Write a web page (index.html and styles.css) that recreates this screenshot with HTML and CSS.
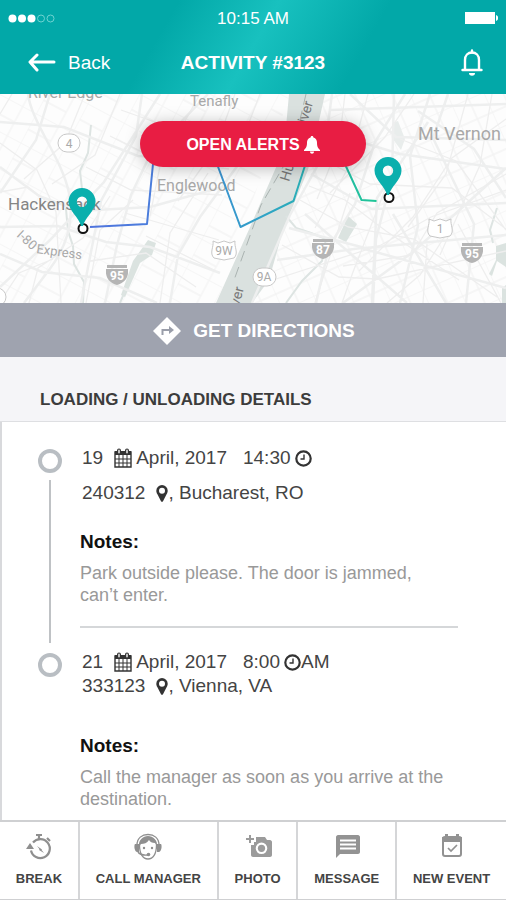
FILE: index.html
```html
<!DOCTYPE html>
<html lang="en">
<head>
<meta charset="utf-8">
<title>Activity #3123</title>
<meta name="viewport" content="width=device-width, initial-scale=1">
<link rel="stylesheet" href="styles.css">
</head>
<body>
<!-- shared icons -->
<svg class="defs" width="0" height="0" aria-hidden="true">
  <symbol id="i-calendar" viewBox="0 0 18 20">
    <path fill="none" stroke="currentColor" stroke-width="1.4" d="M1 4h16v15H1z"/>
    <path fill="currentColor" d="M1 3h16v4H1z"/>
    <path stroke="currentColor" stroke-width="1" d="M1 11h16M1 15h16M5 7v12M9 7v12M13 7v12"/>
    <path stroke="currentColor" stroke-width="4" stroke-linecap="round" d="M5 2.5v2M13 2.5v2"/>
    <path stroke="#fff" stroke-width="1.4" stroke-linecap="round" d="M5 2.3v2.4M13 2.3v2.4"/>
  </symbol>
  <symbol id="i-clock" viewBox="0 0 17 17">
    <circle cx="8.500" cy="8.500" r="7.200" fill="none" stroke="currentColor" stroke-width="2.200"/>
    <path fill="none" stroke="currentColor" stroke-width="1.400" d="M9 4.500V9H5.500"/>
  </symbol>
  <symbol id="i-marker" viewBox="0 0 12 17">
    <path fill="currentColor" fill-rule="evenodd" d="M6 0a5.700 5.700 0 0 1 5.700 5.700c0 1.400-.5 2.400-1 3.400L7 16.200c-.4.800-1.600.8-2 0L1.300 9.100C.8 8.100.3 7.100.3 5.700A5.700 5.700 0 0 1 6 0zm0 2.700a3 3 0 1 0 0 6 3 3 0 0 0 0-6z"/>
  </symbol>
</svg>

<div class="app">
<header class="header">
  <div class="status">
    <svg class="signal" width="48" height="10" viewBox="0 0 48 10" aria-hidden="true">
      <g fill="#fff"><circle cx="4.500" cy="4.500" r="4"/><circle cx="14" cy="4.500" r="4"/><circle cx="23.500" cy="4.500" r="4"/></g>
      <g fill="none" stroke="#6fd3d1"><circle cx="33" cy="4.500" r="3.500"/><circle cx="42.500" cy="4.500" r="3.500"/></g>
    </svg>
    <time class="clock">10:15 AM</time>
    <svg class="battery" width="34" height="14" viewBox="0 0 34 14" aria-hidden="true">
      <path fill="#fff" d="M1 0h30v12H1zM32 3c3 1 3 5 0 6z"/>
    </svg>
  </div>
  <div class="bar">
    <a class="back" href="#">
      <svg width="28" height="20" viewBox="0 0 28 20" aria-hidden="true"><path fill="none" stroke="#fff" stroke-width="3" stroke-linecap="round" stroke-linejoin="round" d="M9 2 2 9l7 8M2.500 9H26"/></svg>
      Back
    </a>
    <h1 class="title">ACTIVITY #3123</h1>
    <button class="bell" type="button" aria-label="Notifications">
      <svg width="24" height="28" viewBox="0 0 24 28"><path fill="none" stroke="#fff" stroke-width="2.400" d="M5 20V11C5 6.500 8 3.500 12 3.500s7 3 7 7.500v9"/><path stroke="#fff" stroke-width="2.400" stroke-linecap="round" d="M2.500 21h19M12 1.500v2"/><path fill="#fff" d="M9 24h6a3 2.700 0 0 1-6 0z"/></svg>
    </button>
  </div>
</header>

<section class="map">
  <svg class="map-art" viewBox="0 0 506 209" preserveAspectRatio="xMidYMid slice" role="img" aria-label="Route map">
    <defs>
      <pattern id="blocks-a" width="41" height="33" patternUnits="userSpaceOnUse" patternTransform="rotate(28)"><path d="M0 0H41M0 18H26M0 0V33M26 0V33" fill="none" stroke="#f4f4f4" stroke-width="1.300"/></pattern>
      <pattern id="blocks-b" width="34" height="39" patternUnits="userSpaceOnUse" patternTransform="rotate(-24)"><path d="M0 0H34M0 22H34M0 0V39M18 0V39" fill="none" stroke="#f3f3f3" stroke-width="1.300"/></pattern>
      <linearGradient id="route" gradientUnits="userSpaceOnUse" x1="90" y1="0" x2="380" y2="0">
        <stop offset="0" stop-color="#4f74de"/><stop offset=".25" stop-color="#4a7fdc"/><stop offset=".6" stop-color="#2fa3c6"/><stop offset="1" stop-color="#1fc795"/>
      </linearGradient>
      <symbol id="i-pin" viewBox="0 0 28 42">
        <path fill="#0aafad" fill-rule="evenodd" d="M14 0a13.500 13.500 0 0 1 13.500 13.500C27.500 23 17 29 15 38h-2C11 29 .5 23 .5 13.500A13.500 13.500 0 0 1 14 0zm0 8.500a5.200 5.200 0 1 0 0 10.400 5.200 5.200 0 0 0 0-10.400z"/>
      </symbol>
      <symbol id="i-interstate" viewBox="0 0 22 20">
        <path fill="#b5b5b5" d="M1 0h20v3H1zM0 4h22c1 8-3 14-11 16C3 18-1 12 0 4z"/>
      </symbol>
    </defs>
    <rect width="506" height="209" fill="#fdfdfd"/>
    <path fill="url(#blocks-a)" d="M0 0H290L217 209H0z"/>
    <path fill="url(#blocks-b)" d="M325 0H506V209H250z"/>

    <!-- parks and water -->
    <path fill="#dae1df" d="M289 0h36l-17 76-25 60-14 50-17 23h-36l35-78 33-76z"/>
    <g fill="#dbe3e0">
      <path d="m148 146 8 3-4 12-12 8-15 34-4-2 12-34zM348 122l9 8-11 18-8-4zM496 152l10-3v24l-9-6-5 15-3-2 7-14zM502 194l4-3v18h-4z"/>
    </g>
    <path fill="#e9edec" d="m392 29 6-2 7 18-4 11-9-12z"/>
    <path fill="none" stroke="#dde4e2" stroke-width="2" d="M91 31l-3 28-8 18 2 18-16 20 2 22 5 15 1 18 10 18-1 21M125 197l-5 12M286 122l10 12 15 5 15 6-4 22-20 20-16 22M497 114l-7 22 3 13"/>

    <!-- roads -->
    <g fill="none" stroke="#eeefef" stroke-width="2.500">
      <path d="M28 0c4 30 34 64 41 99s-7 60-20 77l-25 33M0 73l39 29 40 15 71-4 76-21M0 133l58-1 48 16 44 5 70 26M0 193l50-47 54-58 56-88M142 0l-6 42-35 65-20 102M105 209l12-58 14-50 20-42 57-59M0 28l64 5 74 29 93 3M50 0 36 46 0 99M0 160l42 18 58 6 57 25M170 209l8-48 22-38 68-93"/>
      <path d="M332 0l-8 60-34 61-38 88M316 209l13-56 26-43 20-62 30-48M394 0l-2 83-16 62-3 64M430 0l-20 62 8 70-18 77M335 40l65 20 106 15M311 80l61 35 134-6M289 134l76 20 141-13M277 166l84-12 145 40M343 209l70-51 93-84M418 17l56 38 32 49M393 120l53 89M448 0l-15 44 41 86-8 79M330 16l176-6M372 209l5-105 51-76M305 120l102 89M350 0l46 43 110 3"/>
    </g>
    <g fill="none" stroke="#eeeeee" stroke-width="1.300">
      <path d="M12 0 0 20M85 0 65 49l-41 36M120 0 95 61 52 90M0 49l37 27 19 42 5 91M29 209l9-35 45-30 27-42M110 42l50 25 69 8M121 16l68 24 62 2M86 73l45 23 91 5M160 209l10-70 38-60M86 209l14-73 33-30M125 119l94 27M146 142l70 35M200 0l-40 72-10 50M235 0l-20 55-37 52M260 0l-17 44M90 167l56-8 50 34M0 98l28-5 31 24M0 208l19-29 34-14"/>
      <path d="M345 0l-6 50-22 55M368 0l-20 74-33 60M414 0l-29 43-55 56M468 0l-22 80-38 53M492 0l-12 71-40 90M506 25l-54 39-39 59-54 54M309 92l36 14 41 31 73 49M300 106l48 27 66 12 83 58M282 151l57 32 38 2 129-28M270 187l111-36 50-28 75-27M332 70l38 20 82 4 54 41M400 45l56 22 50 69M427 150l-4 59M350 99l-35 110M388 88l-35 90-11 31M445 142l-25 39-33 28M506 80l-69 39-25 42-69 11M458 130l43 79"/>
    </g>
    <path fill="none" stroke="#aab3b1" stroke-dasharray="11 6" d="m306 0-13 56-32 55-28 78"/>

    <!-- labels -->
    <g class="map-label">
      <text x="28" y="4">River Edge</text>
      <text x="190" y="12" font-size="15">Tenafly</text>
      <text x="157" y="97">Englewood</text>
      <text class="town" x="8" y="116" font-size="17">Hackensack</text>
      <text x="418" y="46" font-size="18">Mt Vernon</text>
      <text font-size="13" transform="translate(16 142) rotate(42)">I-80</text>
      <text x="36" y="159" font-size="13" transform="rotate(8 36 159)">Express</text>
      <text class="river" font-size="14" transform="translate(289 88) rotate(-73)">Hudson River</text>
      <text class="river" font-size="14" transform="translate(236 224) rotate(-75)">River</text>
    </g>
    <g fill="#fff" stroke="#c8c8c8">
      <rect x="58" y="40" width="22" height="18" rx="9"/>
      <rect x="253" y="174" width="23" height="18" rx="9"/>
      <circle cx="-3" cy="203" r="9"/>
      <path d="m213 147 5 2 6-2 6 2 5-2c-1 6 4 12-1 17l-10 2-10-2c-5-5 0-11-1-17zM429 125l5 2 6-2 6 2 5-2c-1 6 4 12-1 17l-10 2-10-2c-5-5 0-11-1-17z"/>
    </g>
    <g class="shield">
      <text x="69" y="54">4</text><text x="264" y="187">9A</text><text x="224" y="161">9W</text><text x="440" y="139">1</text>
    </g>
    <use href="#i-interstate" x="106" y="171" width="22" height="20"/>
    <use href="#i-interstate" x="312" y="145" width="22" height="20"/>
    <use href="#i-interstate" x="461" y="149" width="22" height="20"/>
    <g class="shield shield-on"><text x="117" y="186">95</text><text x="323" y="160">87</text><text x="472" y="164">95</text></g>

    <!-- route -->
    <path fill="none" stroke="url(#route)" stroke-width="2" stroke-linejoin="round" d="M90 133l57-3 6-60 64 0 23.500 63 53-26 13-40h37l18 39 15 1"/>
    <g fill="#fff" stroke="#111" stroke-width="2"><circle cx="83" cy="134.500" r="4.500"/><circle cx="389" cy="103.500" r="4.500"/></g>
    <use href="#i-pin" x="68" y="94" width="28" height="42"/>
    <use href="#i-pin" x="374" y="63" width="28" height="42"/>
  </svg>
  <button class="alerts" type="button">
    OPEN ALERTS
    <svg width="16" height="18" viewBox="0 0 16 18" aria-hidden="true"><path fill="#fff" d="M8 0c1 0 1.400.6 1.400 1.500C12 2.200 13 4.300 13 6.500c0 4 .8 5.500 3 7.500v1H0v-1c2.200-2 3-3.500 3-7.500 0-2.200 1-4.300 3.600-5C6.600.6 7 0 8 0zM6 15.500h4c0 3-4 3-4 0z"/></svg>
  </button>
</section>

<a class="directions" href="#">
  <svg width="28" height="28" viewBox="0 0 28 28" aria-hidden="true"><path fill="#fff" d="m14 0 14 14-14 14L0 14z"/><path fill="none" stroke="#9a9eaa" stroke-width="2" d="M9.500 18v-5H18"/><path fill="#9a9eaa" d="m16 9 5 4-5 4z"/></svg>
  GET DIRECTIONS
</a>

<h2 class="section-title">LOADING / UNLOADING DETAILS</h2>

<ol class="stops">
  <li class="stop">
    <span class="track"><span class="ring"></span><span class="line"></span></span>
    <div class="info">
      <p class="row date"><span>19</span><svg class="cal"><use href="#i-calendar"/></svg><span>April, 2017</span><span class="hour">14:30</span><svg class="time"><use href="#i-clock"/></svg></p>
      <p class="row place"><span>240312</span><svg class="marker"><use href="#i-marker"/></svg><span>, Bucharest, RO</span></p>
      <h3>Notes:</h3>
      <p class="note">Park outside please. The door is jammed, can’t enter.</p>
    </div>
  </li>
  <li class="stop compact">
    <span class="track"><span class="ring"></span></span>
    <div class="info">
      <p class="row date"><span>21</span><svg class="cal"><use href="#i-calendar"/></svg><span>April, 2017</span><span class="hour">8:00</span><svg class="time"><use href="#i-clock"/></svg><span>AM</span></p>
      <p class="row place"><span>333123</span><svg class="marker"><use href="#i-marker"/></svg><span>, Vienna, VA</span></p>
      <h3>Notes:</h3>
      <p class="note">Call the manager as soon as you arrive at the destination.</p>
    </div>
  </li>
</ol>

<nav class="tabs">
  <button type="button">
    <svg width="28" height="28" viewBox="0 0 28 28" aria-hidden="true"><g fill="none" stroke="#8f8f8f" stroke-width="2.200"><path d="M6 17.500a9.500 9.500 0 1 0 2-8"/><path d="M11 2h6M14 2v4M22 5l3 3"/></g><path fill="#8f8f8f" d="M1 16 5 10l4 6zM12 13l5 3.500-1 1.500zM15 15l4 5-5-3z"/></svg>
    BREAK
  </button>
  <button type="button">
    <svg width="28" height="28" viewBox="0 0 28 28" aria-hidden="true"><path fill="none" stroke="#8f8f8f" stroke-width="1.300" d="M3 12C3 5 8 1.500 14 1.500S25 5 25 12M5.500 12c0 9 3.500 14 8.500 14s8.500-5 8.500-14"/><path fill="#8f8f8f" d="M5 14C4 7 9 3 14 3s10 4 9 11l-2-4c-3 0-5-1-6-3-2 3-5 4-8 4zM1 11h4v8H3c-3-1-3-7-2-8zM23 11h4c1 1 1 7-2 8h-2z"/><path fill="none" stroke="#8f8f8f" stroke-width="1.500" d="M4 19c2 3 5 3.500 10 3"/><g fill="#8f8f8f"><circle cx="10" cy="15" r="1.200"/><circle cx="18" cy="15" r="1.200"/><circle cx="14.500" cy="21.500" r="1.800"/></g></svg>
    CALL MANAGER
  </button>
  <button type="button">
    <svg width="28" height="28" viewBox="0 0 28 28" aria-hidden="true"><path fill="#9b9b9b" fill-rule="evenodd" d="M12 4h9l2 3h3c1 0 2 1 2 2v13c0 1-1 2-2 2H9c-1 0-2-1-2-2V12h3V9h2zm5.500 5.500a5.800 5.800 0 1 0 0 11.600 5.800 5.800 0 0 0 0-11.600z"/><circle cx="17.500" cy="15.300" r="3.600" fill="#9b9b9b"/><path stroke="#9b9b9b" stroke-width="2" d="M2 6h8M6 2v8"/></svg>
    PHOTO
  </button>
  <button type="button">
    <svg width="28" height="28" viewBox="0 0 28 28" aria-hidden="true"><path fill="#939393" d="M5 2h20c1 0 2 1 2 2v15c0 1-1 2-2 2H7l-4 4V4c0-1 1-2 2-2z"/><path stroke="#fff" stroke-width="2" d="M7 7.500h16M7 11.500h16M7 15.500h16"/></svg>
    MESSAGE
  </button>
  <button type="button">
    <svg width="28" height="28" viewBox="0 0 28 28" aria-hidden="true"><rect x="5" y="4" width="18" height="19" rx="2" fill="none" stroke="#929292" stroke-width="2"/><path fill="#929292" d="M4 4h20v5H4zM7 1h3v4H7zM18 1h3v4h-3z"/><path fill="none" stroke="#929292" stroke-width="1.700" d="m10 15 3 3 6-6"/></svg>
    NEW EVENT
  </button>
</nav>
</div>
</body>
</html>
```

FILE: styles.css
```css
/* reset */
*{box-sizing:border-box;}
body,h1,h2,h3,p,ol{margin:0;padding:0;}
li{list-style:none;}
a{color:inherit;text-decoration:none;}
button{margin:0;padding:0;border:0;background:none;font:inherit;color:inherit;cursor:pointer;}
body{font-family:"Liberation Sans",Arial,sans-serif;font-size:19px;line-height:24px;color:#444;background:#fff;}
svg{display:block;flex:none;}
.defs{position:absolute;}
.app{display:flex;flex-direction:column;min-height:100vh;}

/* header */
.header{height:94px;padding:7px 8px 0;color:#fff;background:linear-gradient(120deg,#02a8a8 32%,#18c1bf 50%,#02a8a8 70%);}
.status,.bar{display:grid;grid-template-columns:1fr auto 1fr;align-items:center;}
.status{height:22px;}
.clock{font-size:17px;}
.signal,.battery{align-self:center;}
.battery{justify-self:end;}
.bar{height:50px;padding:0 14px;margin-top:9px;}
.back{display:flex;align-items:center;gap:12px;padding-left:6px;}
.title{font-size:19px;font-weight:bold;}
.bell{justify-self:end;}

/* map */
.map{position:relative;height:209px;overflow:hidden;}
.map-art{width:100%;height:100%;}
.map-label{font-family:Roboto,sans-serif;font-size:16px;fill:#a8a8a8;}
.map-label .town{fill:#858585;}
.map-label .river{fill:#777;}
.shield{font:12px Roboto,sans-serif;fill:#aaa;text-anchor:middle;}
.shield-on{font-weight:bold;fill:#fff;}
.alerts{position:absolute;top:27px;left:0;right:0;display:flex;align-items:center;justify-content:center;gap:4px;width:226px;height:46px;margin:0 auto;padding-top:2px;border-radius:23px;background:#e81d43;color:#fff;font-size:16px;font-weight:bold;box-shadow:0 2px 16px rgba(0,0,0,.25);}

.directions{display:flex;align-items:center;justify-content:center;gap:12px;height:54px;padding:2px 0 0 2px;background:#9fa3af;color:#fff;font-weight:bold;}
.section-title{padding:31px 40px 9px;background:#f5f5f8;border-bottom:1px solid #dedfe2;color:#3c3c3c;font-size:17px;}

/* stops */
.stops{flex:1;padding:24px 48px 8px 36px;border-left:2px solid #d8d9dc;}
.stop{display:grid;grid-template-columns:24px 1fr;gap:18px;}
.track{display:flex;flex-direction:column;align-items:center;gap:7px;padding-top:3px;}
.ring{width:24px;height:24px;border:4px solid #b9bec3;border-radius:50%;}
.line{flex:1;width:2px;margin-bottom:7px;background:#bfc2c5;}
.row{display:flex;align-items:center;padding-left:2px;}
.cal{width:18px;height:20px;margin:0 4px 0 11px;}
.hour{margin:0 4px 0 16px;}
.time{width:17px;height:17px;}
.marker{width:12px;height:17px;margin-left:11px;}
.cal,.time,.marker{color:#333;}
.place{margin-top:11px;}
.stop h3{margin-top:25px;color:#111;font-size:19px;}
.note{margin-top:8px;padding-right:8px;color:#999;font-size:18px;line-height:22px;}
.stop:first-child .info{padding-bottom:44px;background:linear-gradient(#d5d7d9,#d5d7d9) 0 calc(100% - 22px)/100% 2px no-repeat;}
.compact .place{margin-top:0;}
.compact h3{margin-top:36px;}

/* bottom bar */
.tabs{display:flex;border-top:2px solid #cfd0d2;border-bottom:1px solid #cfd0d2;background:#fff;}
.tabs button{flex:1 1 auto;display:flex;flex-direction:column;align-items:center;gap:7px;height:77px;padding:11px 8px 0;color:#444;font-size:13px;font-weight:bold;line-height:22px;white-space:nowrap;}
.tabs button+button{border-left:2px solid #d5d6d8;}
```
